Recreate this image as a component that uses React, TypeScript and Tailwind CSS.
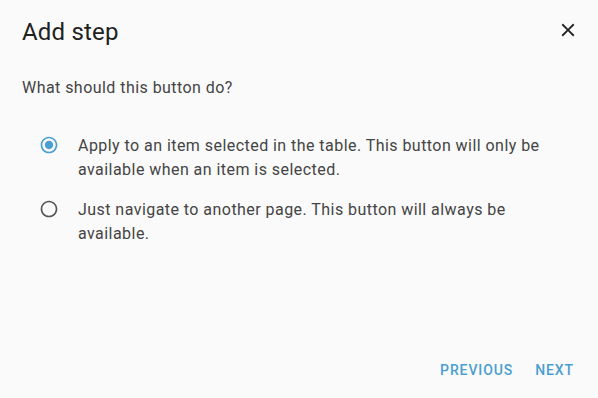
import React from "react";

function RadioIcon({ checked }: { checked: boolean }) {
  return (
    <svg width="20" height="20" viewBox="0 0 24 24" className={checked ? "text-[#4a9fd0]" : "text-[#555555]"} fill="currentColor">
      <path d="M12 2C6.48 2 2 6.48 2 12s4.48 10 10 10 10-4.48 10-10S17.52 2 12 2zm0 18c-4.42 0-8-3.58-8-8s3.58-8 8-8 8 3.58 8 8-3.58 8-8 8z" />
      {checked && <path d="M12 7c-2.76 0-5 2.24-5 5s2.24 5 5 5 5-2.24 5-5-2.24-5-5-5z" />}
    </svg>
  );
}

export default function App() {
  const options = [
    {
      checked: true,
      text: "Apply to an item selected in the table. This button will only be available when an item is selected.",
    },
    {
      checked: false,
      text: "Just navigate to another page. This button will always be available.",
    },
  ];
  return (
    <div className="w-[598px] h-[398px] bg-[#fafafa] flex flex-col font-['Roboto',sans-serif]">
      <div className="flex items-start justify-between pl-[22px] pr-[19px] pt-4">
        <h2 className="text-2xl leading-8 font-normal tracking-[0.2px] text-[#212121]">Add step</h2>
        <button className="mt-[3px] w-[22px] h-[22px] flex items-center justify-center text-[#222]">
          <svg width="22" height="22" viewBox="0 0 24 24" fill="currentColor">
            <path d="M19 6.41 17.59 5 12 10.59 6.41 5 5 6.41 10.59 12 5 17.59 6.41 19 12 13.41 17.59 19 19 17.59 13.41 12z" />
          </svg>
        </button>
      </div>
      <p className="pl-[22px] mt-[28px] text-base leading-6 tracking-[0.45px] text-[#444444]">
        What should this button do?
      </p>
      <div className="flex flex-col gap-4 mt-[34px] pl-[39px] pr-[24px]">
        {options.map((o, i) => (
          <label key={i} className="flex items-start gap-[19px]">
            <span className="mt-[1px] shrink-0">
              <RadioIcon checked={o.checked} />
            </span>
            <span className="text-base leading-6 tracking-[0.45px] text-[#444444]">{o.text}</span>
          </label>
        ))}
      </div>
      <div className="mt-auto flex justify-end gap-[6px] pr-[16px] pb-[10px]">
        <button className="px-2 py-1.5 text-sm font-medium leading-[24px] tracking-[0.9px] uppercase text-[#4a9fd0]">
          Previous
        </button>
        <button className="px-2 py-1.5 text-sm font-medium leading-[24px] tracking-[0.9px] uppercase text-[#4a9fd0]">
          Next
        </button>
      </div>
    </div>
  );
}
